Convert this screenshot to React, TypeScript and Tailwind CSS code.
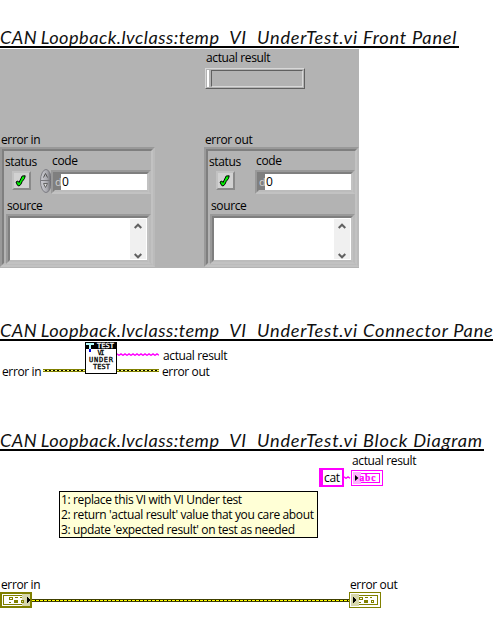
import type { ReactNode } from 'react';

const ui = "font-['Open_Sans','Noto_Sans',sans-serif] text-[12px] leading-[15px] tracking-[-0.37px] whitespace-pre text-black";

function Label({ children, className = '' }: { children: ReactNode; className?: string }) {
  return <div className={`${ui} ${className}`}>{children}</div>;
}

function Heading({ title, className }: { title: string; className: string }) {
  return (
    <h2
      className={`h-[22px] overflow-hidden border-b-2 border-black font-['Lato',sans-serif] text-[18.2px] leading-[23px] font-normal tracking-[0.48px] whitespace-pre text-[#111] italic ${className}`}
    >
      <span className="[word-spacing:-1.2px]">CAN Loopback.lvclass:temp</span>
      <span className="[word-spacing:0.5px]">{'\u00a0\u00a0VI\u00a0\u00a0'}</span>
      <span className="tracking-[0.77px]">UnderTest.vi {title}</span>
    </h2>
  );
}

function CheckButton() {
  return (
    <div className="h-[19px] w-[19px] border-2 border-t-[#c2c2c2] border-r-[#8a8a8a] border-b-[#8a8a8a] border-l-[#c2c2c2] bg-[#d2d2d2]">
      <svg width="15" height="15" viewBox="0 0 15 15" className="block">
        <path d="M2 9L3.8 8L5 9.5L8.2 3L11.2 2.8L10.5 5.5L8.2 8.5L6.8 11.5L5 13L3.5 12.3Z" fill="#00f000" stroke="#000" strokeWidth="1" />
      </svg>
    </div>
  );
}

function Spinner() {
  return (
    <svg width="12" height="24" viewBox="0 0 12 24" className="block max-w-none">
      <defs>
        <linearGradient id="knob" x1="0" x2="1">
          <stop offset="0" stopColor="#d0d0d6" />
          <stop offset="0.6" stopColor="#a8a8ae" />
          <stop offset="1" stopColor="#606066" />
        </linearGradient>
      </defs>
      <ellipse cx="6" cy="12" rx="5.5" ry="11.5" fill="url(#knob)" stroke="#7c7c82" />
      <path d="M1 11.5H11" stroke="#77777b" />
      <path d="M3.5 8.5L5.5 4.5L7.5 8.5" fill="none" stroke="#555" />
      <path d="M3.5 14.5H7.5L5.5 18.5Z" fill="#ddd" stroke="#666" />
    </svg>
  );
}

function Bevel({ children, className }: { children: ReactNode; className: string }) {
  return (
    <div className={`border-2 border-t-[#999999] border-r-[#bbbbbb] border-b-[#c2c2c2] border-l-[#999999] ${className}`}>
      <div className="h-full w-full border-2 border-t-[#7f7f7f] border-r-[#c2c2c2] border-b-[#bcbcbc] border-l-[#7f7f7f]">{children}</div>
    </div>
  );
}

function ErrorCluster({ name, spinner = false }: { name: string; spinner?: boolean }) {
  return (
    <div className="w-[155px]">
      <Label className="h-[16px] pt-px pl-px">{name}</Label>
      <Bevel className="h-[120px] w-[155px]">
        <div className="flex h-[18px]">
          <Label className="w-[47px] pt-[3px] pl-px tracking-[-0.25px]">status</Label>
          <Label className="pt-[2px] pl-px tracking-[-0.2px]">code</Label>
        </div>
        <div className="flex h-[25px]">
          <div className="w-[28px] pt-[2px] pl-[8px]">
            <CheckButton />
          </div>
          <div className="ml-[8px] w-[11px] shrink-0 overflow-visible">{spinner && <Spinner />}</div>
          <Bevel className="mt-px h-[24px] w-[100px]">
            <div className="flex h-full">
              <div className="w-[6px] bg-[#7f7f7f] font-['Open_Sans',sans-serif] text-[11px] leading-[16px] text-[#d0d0d0]">d</div>
              <Label className="flex-1 bg-white pl-px">0</Label>
            </div>
          </Bevel>
        </div>
        <Label className="mt-[4px] h-[16px] pl-[3px] tracking-[-0.2px]">source</Label>
        <Bevel className="ml-[2px] h-[50px] w-[145px]">
          <div className="flex h-full justify-end bg-white py-px pr-px">
            <div className="flex w-[16px] flex-col items-center justify-between bg-[#f0f0f0] pt-[4px]">
              <svg width="8" height="6" viewBox="0 0 8 6">
                <path d="M0.7 5L4 1.7L7.3 5" fill="none" stroke="#606060" strokeWidth="2" />
              </svg>
              <svg width="8" height="6" viewBox="0 0 8 6">
                <path d="M0.7 1L4 4.3L7.3 1" fill="none" stroke="#606060" strokeWidth="2" />
              </svg>
            </div>
          </div>
        </Bevel>
      </Bevel>
    </div>
  );
}

function ErrorWire({ width, thin = false }: { width: number; thin?: boolean }) {
  return (
    <svg width={width} height="3" viewBox={`0 0 ${width} 3`} className="block shrink-0" shapeRendering="crispEdges">
      <rect width={width} height="3" fill={thin ? '#404000' : '#808000'} />
      <path d={`M0 1.5H${width}`} stroke="#000" />
      <path d={`M0 1.5H${width}`} stroke={thin ? '#ffff00' : '#ffff80'} strokeDasharray={thin ? '3 1' : '2 2'} />
    </svg>
  );
}

function StringWire({ width }: { width: number }) {
  const points = Array.from({ length: Math.floor(width / 2) + 1 }, (_, i) => `${i * 2},${i % 2 ? 2.3 : 0.9}`).join(' ');
  return (
    <svg width={width} height="3" viewBox={`0 0 ${width} 3`} className="block shrink-0">
      <polyline points={points} fill="none" stroke="#ff00ff" strokeWidth="1.4" />
    </svg>
  );
}

function TestIcon() {
  const face = { fontFamily: 'DejaVu Sans Mono, monospace', fontSize: 7, fontWeight: 400, strokeWidth: 0.3 };
  return (
    <svg width="32" height="32" viewBox="0 0 32 32" className="block">
      <rect x="0.5" y="0.5" width="31" height="31" fill="#fff" stroke="#000" />
      <rect width="32" height="7" fill="#000" />
      <path d="M1 1H9V3H6V7H4V3H1Z" fill="#b8ffff" />
      <rect x="4" y="7" width="2" height="3" fill="#0000e0" />
      <g style={face} stroke="#000">
        <text x="12" y="6" fill="#fff" stroke="#fff" textLength="17">TEST</text>
        <text x="12.5" y="13" textLength="7">VI</text>
        <text x="4" y="20" textLength="24">UNDER</text>
        <text x="8" y="27" textLength="17">TEST</text>
      </g>
    </svg>
  );
}

function StringIndicator() {
  return (
    <svg width="32" height="16" viewBox="0 0 32 16" className="block">
      <rect x="0.5" y="0.5" width="31" height="15" fill="#fff" stroke="#ff00ff" />
      <rect x="3.5" y="3.5" width="25" height="9" fill="#fff" stroke="#ff00ff" />
      <rect x="2" y="2" width="8" height="12" fill="#ffb0ff" />
      <text x="8.5" y="11" textLength="16" fill="#ff00ff" stroke="#ff00ff" strokeWidth="0.25" fontFamily="Liberation Serif, serif" fontSize="9.5" fontWeight="700">abc</text>
      <path d="M4 5L7.5 8L4 11Z" fill="#000" />
    </svg>
  );
}

function ErrorTerminal({ control = false }: { control?: boolean }) {
  return (
    <svg width="32" height="16" viewBox="0 0 32 16" className="block" shapeRendering="crispEdges">
      {control ? (
        <rect x="1" y="1" width="30" height="14" fill="#fff" stroke="#808000" strokeWidth="2" />
      ) : (
        <rect x="0.5" y="0.5" width="31" height="15" fill="#fff" stroke="#808000" />
      )}
      <rect x="3.5" y="3.5" width="25" height="9" fill="#fff" stroke="#808000" />
      <rect x={control ? 22 : 2} y="2" width="8" height="12" fill="#d6d6ac" />
      <g transform={control ? 'translate(-2 0)' : 'translate(-1 0)'} fill="none" stroke="#808000">
        <path d="M11.5 5.5H14.5V7.5H11.5ZM17 5.5H20M22 5.5H24M11 10.5H13M23.5 8.5H25.5V10.5H23.5Z" />
        <path d="M16 8H20V11H16Z" fill="#808000" stroke="none" />
      </g>
      <path d={control ? 'M27 4.5L31 8L27 11.5Z' : 'M4 4.5L8 8L4 11.5Z'} fill="#000" />
    </svg>
  );
}

export default function App() {
  return (
    <main className="h-[633px] w-[493px] overflow-hidden bg-white pt-[26px]">
      <section className="h-[293px]">
        <Heading title="Front Panel" className="w-[459px]" />
        <div className="mt-px h-[219px] w-[359px] bg-[#b3b3b3] pt-px">
          <div className="ml-[205px] w-[100px]">
            <Label className="h-[18px] pl-px">actual result</Label>
            <div className="h-[21px] border border-t-[#d8d8d8] border-r-[#606060] border-b-[#606060] border-l-[#d8d8d8]">
              <div className="flex h-full gap-[2px] pr-px pb-px pt-px">
                <div className="ml-px w-[2px] bg-white" />
                <div className="flex-1 border border-t-[#606060] border-r-[#d8d8d8] border-b-[#d8d8d8] border-l-[#606060]" />
              </div>
            </div>
          </div>
          <div className="mt-[42px] flex gap-[49px]">
            <ErrorCluster name="error in" spinner />
            <ErrorCluster name="error out" />
          </div>
        </div>
      </section>

      <section className="h-[110px]">
        <Heading title="Connector Pane" className="w-[493px]" />
        <div className="mt-px flex h-[37px]">
          <Label className="w-[43px] pt-[22px] pl-[2px]">error in</Label>
          <div className="pt-[27px]"><ErrorWire width={42} /></div>
          <TestIcon />
          <div className="flex flex-col justify-between pt-[11px] pb-[7px]">
            <StringWire width={42} />
            <ErrorWire width={42} />
          </div>
          <div className="pt-[6px] pl-[3px]">
            <Label className="h-[16px] pl-px">actual result</Label>
            <Label>error out</Label>
          </div>
        </div>
      </section>

      <section>
        <Heading title="Block Diagram" className="w-[484px]" />
        <Label className="mt-[2px] pl-[352px]">actual result</Label>
        <div className="ml-[319px] flex h-[19px] items-center">
          <Label className="h-[19px] w-[25px] border-2 border-l-4 border-[#ff00ff] pl-px">cat</Label>
          <StringWire width={7} />
          <StringIndicator />
        </div>
        <div className="mt-[4px] ml-[59px] h-[47px] w-[259px] border border-black bg-[#ffffd6] pl-px">
          <Label>1: replace this VI with VI Under test</Label>
          <Label>{"2: return 'actual result' value that you care about"}</Label>
          <Label>{"3: update 'expected result' on test as needed"}</Label>
        </div>
        <div className="mt-[39px] flex">
          <Label className="w-[349px] pl-px">error in</Label>
          <Label className="pl-px">error out</Label>
        </div>
        <div className="flex items-center">
          <ErrorTerminal control />
          <ErrorWire width={317} thin />
          <ErrorTerminal />
        </div>
      </section>
    </main>
  );
}
